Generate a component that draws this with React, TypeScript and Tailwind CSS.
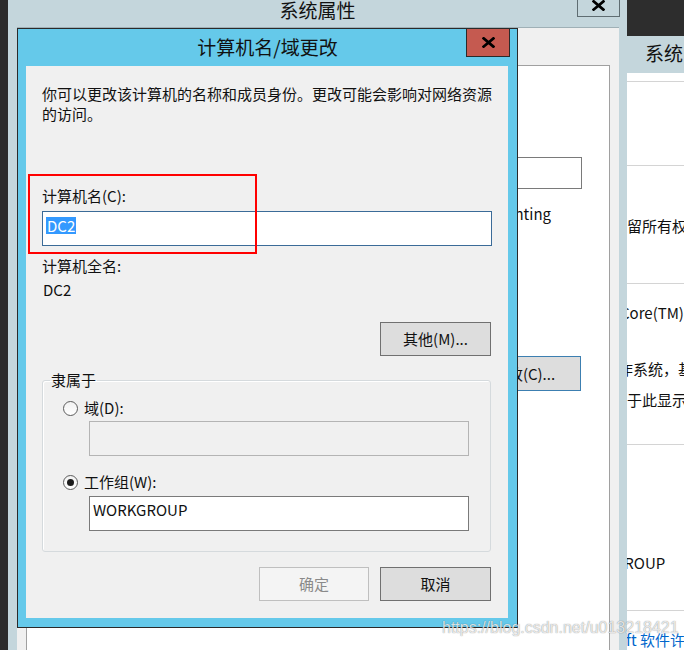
function CloseGlyph() {
  return (
    <svg width="13" height="11" viewBox="0 0 13 11" className="block">
      <path d="M1.6 1.4L11.4 9.6M11.4 1.4L1.6 9.6" stroke="#000" strokeWidth="2.7" strokeLinecap="square" />
    </svg>
  );
}

function Radio({ checked }: { checked?: boolean }) {
  return (
    <span className="flex h-[15px] w-[15px] shrink-0 items-center justify-center rounded-full border border-[#5c5c5c] bg-gradient-to-b from-[#f2f2f2] to-white">
      {checked && <span className="h-[7px] w-[7px] rounded-full bg-[#1c1c1c]" />}
    </span>
  );
}

function Button({ children, disabled }: { children: React.ReactNode; disabled?: boolean }) {
  return (
    <div
      className={
        disabled
          ? "flex h-[34px] w-[110px] items-center justify-center border border-[#bfbfbf] bg-[#f4f4f4] text-[#8a8a8a]"
          : "flex h-[34px] w-[111px] items-center justify-center border border-[#707070] bg-[#dddddd] text-[#111]"
      }
    >
      {children}
    </div>
  );
}

// window underneath, on the right edge
function RightWindow() {
  return (
    <div className="absolute left-[600px] top-0 z-0 flex h-[650px] w-[84px] flex-col bg-white text-[15px] leading-[20px] text-[#111] whitespace-nowrap">
      <div className="h-[36px] shrink-0 bg-[#2d2d2d]" />
      <div className="h-[37px] shrink-0 bg-[#c4d6dc] pl-[45px] pt-[7px] text-[19px] leading-[20px]">系统</div>
      <div className="h-[8px] shrink-0" />
      <div className="h-[84px] shrink-0 border-t border-[#d4d4d4]" />
      <div className="h-[118px] shrink-0 border-t border-[#d4d4d4] pl-[12px] pt-[50px]">保留所有权利</div>
      <div className="h-[161px] shrink-0 border-t border-[#d4d4d4] pt-[19px]">
        <div className="pl-[20px]">Core(TM) i7</div>
        <div className="mt-[36px] pl-[3px]">操作系统，基于</div>
        <div className="mt-[11px] pl-[12px]">关于此显示</div>
      </div>
      <div className="h-[166px] shrink-0 border-t border-[#d4d4d4] pl-[14px] pt-[108px]">GROUP</div>
      <div className="flex-1 border-t border-[#d4d4d4] pl-[10px] pt-[19px] text-[#0066cc]">soft 软件许可</div>
    </div>
  );
}

// 系统属性 window, partly covered by the dialog
function SystemWindow() {
  return (
    <div className="absolute left-[8px] top-0 z-10 flex h-[650px] w-[619px] flex-col bg-[#c4d6dc]">
      <div className="relative flex h-[27px] shrink-0 justify-center">
        <span className="text-[19px] leading-[20px] text-[#111]">系统属性</span>
        <div className="absolute right-[7px] top-[-1px] flex h-[18px] w-[43px] justify-center border border-[#5f6d72]">
          <CloseGlyph />
        </div>
      </div>
      <div className="ml-[9px] mr-[8px] flex-1 border-t border-[#9fb0b6] bg-[#f0f0f0]">
        <div className="ml-[9px] mr-[9px] mt-[37px] h-[700px] border border-[#a0a0a0] bg-white pl-[413px] pt-[91px] text-[15px] leading-[20px] text-[#111]">
          <div className="h-[32px] w-[142px] border border-[#7a7a7a] bg-white" />
          <div className="mt-[15px] w-[111px] text-right">Accounting</div>
          <div className="ml-[27px] mt-[132px] flex h-[35px] w-[114px] items-center justify-center border border-[#3c7fb1] bg-[#dddddd]">
            更改(C)...
          </div>
        </div>
      </div>
    </div>
  );
}

function Dialog() {
  return (
    <div className="absolute left-[17px] top-[28px] z-20 flex h-[600px] w-[501px] flex-col border border-[#2a2a2a] bg-[#65c9ea]">
      <div className="relative flex h-[37px] shrink-0 justify-center pt-[6px]">
        <span className="text-[19px] leading-[24px] text-[#111]">计算机名/域更改</span>
        <div className="absolute right-[7px] top-[-1px] flex h-[29px] w-[44px] items-center justify-center border border-[#2a2a2a] bg-[#c55a50]">
          <CloseGlyph />
        </div>
      </div>

      <div className="mb-[9px] ml-[8px] mr-[9px] flex flex-1 flex-col bg-[#f0f0f0] px-[16px] pt-[18px] text-[15px] leading-[20px] text-[#111]">
        <p>你可以更改该计算机的名称和成员身份。更改可能会影响对网络资源的访问。</p>

        <div className="mt-[62px]">计算机名(C):</div>
        <div className="mt-[5px] h-[35px] w-[450px] border border-[#3b6b98] bg-white pl-[3px] pt-[4px]">
          <span className="inline-block bg-[#3399ff] px-[1px] leading-[17px] text-white">DC2</span>
        </div>

        <div className="mt-[10px]">计算机全名:</div>
        <div className="mt-[4px] pl-[1px]">DC2</div>

        <div className="mt-[22px] flex justify-end pr-[1px]">
          <Button>其他(M)...</Button>
        </div>

        <fieldset className="mr-[1px] mt-[14px] rounded-[3px] border border-[#d5dadd] shadow-[inset_1px_1px_0_#ffffff]">
          <legend className="ml-[7px] px-[1px]">隶属于</legend>
          <div className="pb-[20px] pl-[20px] pr-[21px] pt-[8px]">
            <div className="flex items-center gap-[6px]">
              <Radio />
              <span>域(D):</span>
            </div>
            <div className="ml-[26px] mt-[3px] h-[35px] w-[380px] border border-[#b4b4b4] bg-[#f0f0f0]" />
            <div className="mt-[16px] flex items-center gap-[6px]">
              <Radio checked />
              <span>工作组(W):</span>
            </div>
            <div className="ml-[26px] mt-[4px] h-[35px] w-[380px] border border-[#7a7a7a] bg-white pl-[3px] pt-[3px]">
              WORKGROUP
            </div>
          </div>
        </fieldset>

        <div className="mt-[15px] flex justify-end gap-[11px] pr-[1px]">
          <Button disabled>确定</Button>
          <Button>取消</Button>
        </div>
      </div>
    </div>
  );
}

export default function App() {
  return (
    <div className="relative h-[650px] w-[684px] overflow-hidden bg-[#2b2b2b] font-['Noto_Sans_CJK_SC',sans-serif]">
      <RightWindow />
      <SystemWindow />
      <Dialog />
      {/* red annotation box */}
      <div className="absolute left-[28px] top-[174px] z-30 h-[80px] w-[229px] border-2 border-[#ff0000]" />
      {/* csdn watermark */}
      <div className="absolute left-[442px] top-[618px] z-40 whitespace-nowrap font-['Liberation_Sans',sans-serif] text-[16px] leading-[20px] text-white/80 [text-shadow:0_0_1px_rgba(0,0,0,0.55)]">
        https://blog.csdn.net/u013218421
      </div>
    </div>
  );
}
